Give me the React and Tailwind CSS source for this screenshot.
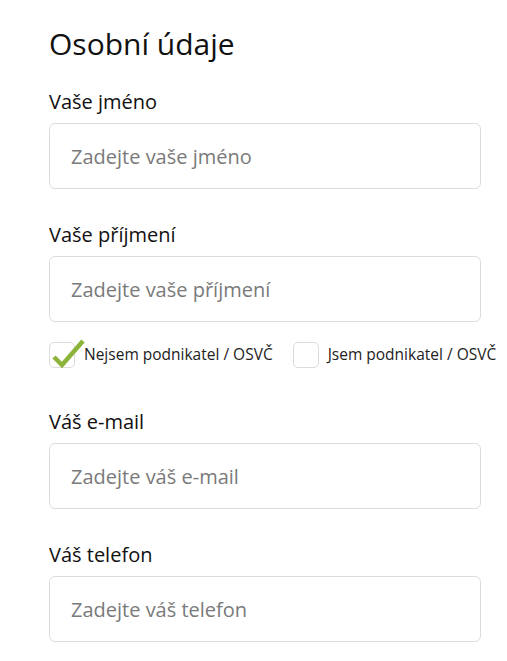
import React from 'react';

const font = { fontFamily: '"Open Sans", "Noto Sans", sans-serif' };

function Field({ label, placeholder, className = '' }) {
  return (
    <div className={className}>
      <label className="block text-[20px] leading-[24px] text-[#111]">{label}</label>
      <input
        type="text"
        placeholder={placeholder}
        className="mt-[9px] block w-[432px] h-[66px] rounded-[6px] border border-[#dcdcdc] bg-white px-[21px] text-[20px] text-[#333] placeholder:text-[#7a7a7a] outline-none"
        style={font}
      />
    </div>
  );
}

function Check({ checked, label }) {
  return (
    <label className="flex items-center gap-[9px] cursor-pointer">
      <span className="relative w-[26px] h-[26px] rounded-[5px] border border-[#dcdcdc] bg-white flex-shrink-0">
        {checked && (
          <svg className="absolute left-[1px] top-[-5px]" width="34" height="32" viewBox="0 0 34 32">
            <path d="M3 19 L11 27 L32 3" fill="none" stroke="#8cb43a" strokeWidth="4.5" strokeLinecap="butt" strokeLinejoin="miter" />
          </svg>
        )}
      </span>
      <span className="text-[15.5px] text-[#222] whitespace-nowrap">{label}</span>
    </label>
  );
}

export default function App() {
  return (
    <div className="min-h-screen bg-white" style={font}>
      <div className="pl-[49px] pt-[24px]">
        <h2 className="text-[30px] leading-[40px] text-[#111]">Osobní údaje</h2>
        <Field className="mt-[26px]" label="Vaše jméno" placeholder="Zadejte vaše jméno" />
        <Field className="mt-[34px]" label="Vaše příjmení" placeholder="Zadejte vaše příjmení" />
        <div className="mt-[20px] flex items-center gap-[20px]">
          <Check checked label="Nejsem podnikatel / OSVČ" />
          <Check label="Jsem podnikatel / OSVČ" />
        </div>
        <Field className="mt-[42px]" label="Váš e-mail" placeholder="Zadejte váš e-mail" />
        <Field className="mt-[34px]" label="Váš telefon" placeholder="Zadejte váš telefon" />
      </div>
    </div>
  );
}
